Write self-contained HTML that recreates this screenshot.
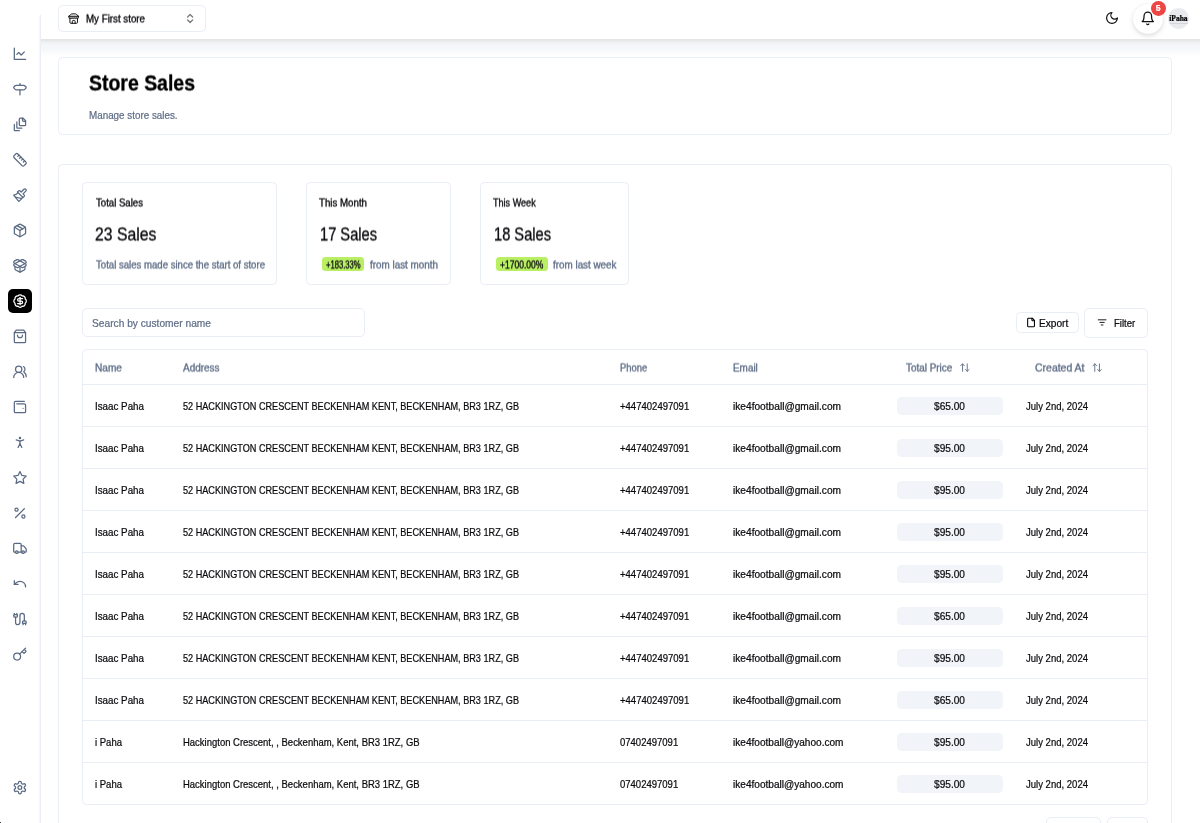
<!DOCTYPE html>
<html lang="en"><head><meta charset="utf-8"><title>Store Sales</title>
<style>
*{box-sizing:border-box;margin:0;padding:0}
html,body{width:1200px;height:823px;overflow:hidden;background:#fff}
body{position:relative;font-family:"Liberation Sans",sans-serif;color:#0b0b0f;-webkit-font-smoothing:antialiased}
main,header,nav{position:absolute;left:0;top:0;width:1200px;height:823px;overflow:hidden;will-change:transform}
header,nav{pointer-events:none}
.b{position:absolute}
.half{position:absolute;left:0;top:0;width:1200px;height:823px;will-change:transform;transform:translateY(.5px) rotate(.001deg)}
.t{position:absolute;white-space:pre;line-height:1;transform-origin:0 0;-webkit-text-stroke:.22px currentColor}
.tc{transform-origin:50% 0}
.half .t{-webkit-text-stroke:.34px currentColor}
.i{position:absolute;overflow:visible}
.hl{position:absolute;left:83.4px;width:1063.3px;height:1px;background:#e9edf5}
.bar{position:absolute;left:0;top:0;width:1200px;height:39px;background:#fff}
.shadow{position:absolute;left:40px;top:39px;width:1160px;height:17px;background:linear-gradient(to bottom,#e3e5e6 0,#e4e6e6 1px,#ebedee 2.5px,#f0f2f4 4px,#f3f5f8 5.5px,#f4f6fa 7px,#f5f7fa 10.5px,#fafbfc 13px,#fdfdfe 15.5px,#fff 17px)}
.side{position:absolute;left:0;top:0;width:40px;height:823px;background:#fff}
.sideline{position:absolute;left:39px;top:15px;width:2px;height:808px;background:linear-gradient(to right,#f5f7fa 0,#f5f7fa 1px,#ebeef5 1px,#ebeef5 2px)}
.active{position:absolute;width:24px;height:23.6px;border-radius:5px;background:#000}
.bellbtn{position:absolute;left:1133px;top:3.6px;width:30px;height:30px;border-radius:50%;background:#fff;box-shadow:0 2px 5px rgba(0,0,0,.13),0 0 2px rgba(0,0,0,.05)}
.badge{position:absolute;left:1150.9px;top:0.9px;width:14.8px;height:14.8px;border-radius:50%;background:#ef4444}
.avatar{position:absolute;left:1168px;top:8px;width:21px;height:21px;border-radius:50%;background:#e9eaee}
.avline{position:absolute;left:1170px;top:23px;width:17.5px;height:1px;background:#d3d5db}
</style></head>
<body>
<main>
<div class="b" style="left:57.80px;top:56.60px;width:1113.80px;height:78.00px;border-radius:4.5px;background:#fff;border:1px solid #e9edf5;"></div>

<span class="t" style="top:111px;font-size:10.05px;color:#5f6e87;left:88.90px;transform:scaleX(0.9792);">Manage store sales.</span>
<div class="b" style="left:57.80px;top:164.00px;width:1113.80px;height:736.00px;border-radius:4.5px;background:#fff;border:1px solid #e9edf5;"></div>
<div class="b" style="left:82.40px;top:182.40px;width:194.20px;height:102.20px;border-radius:4.5px;background:#fff;border:1px solid #e9edf5;"></div>



<div class="b" style="left:306.30px;top:182.40px;width:144.40px;height:102.20px;border-radius:4.5px;background:#fff;border:1px solid #e9edf5;"></div>


<div class="b" style="left:322.10px;top:257.40px;width:42.40px;height:13.80px;border-radius:3.5px;background:#b9ef62;"></div>


<div class="b" style="left:480.30px;top:182.40px;width:148.60px;height:102.20px;border-radius:4.5px;background:#fff;border:1px solid #e9edf5;"></div>


<div class="b" style="left:496.00px;top:257.40px;width:52.00px;height:13.80px;border-radius:3.5px;background:#b9ef62;"></div>


<div class="b" style="left:82.40px;top:308.10px;width:283.00px;height:29.40px;border-radius:5px;background:#fff;border:1px solid #e9edf5;"></div>
<span class="t" style="top:319px;font-size:10.05px;color:#5f6e87;left:92.30px;transform:scaleX(1.0147);">Search by customer name</span>
<div class="b" style="left:1016.00px;top:312.00px;width:63.00px;height:21.00px;border-radius:4.5px;background:#fff;border:1px solid #e9edf5;"></div>
<svg class="i" style="left:1025px;top:317px;width:12px;height:11px;color:#000" viewBox="-2.235 -0.941 28.235 25.882" fill="none" stroke="currentColor" stroke-width="2.5" stroke-linecap="round" stroke-linejoin="round"><path d="M15 2H6a2 2 0 0 0-2 2v16a2 2 0 0 0 2 2h12a2 2 0 0 0 2-2V7Z"/><path d="M14 2v4a2 2 0 0 0 2 2h4"/></svg>
<span class="t" style="top:319px;font-size:10.05px;left:1039.30px;transform:scaleX(1.0087);">Export</span>
<div class="b" style="left:1084.00px;top:308.00px;width:64.00px;height:30.00px;border-radius:5px;background:#fff;border:1px solid #e9edf5;"></div>
<svg class="i" style="left:1096px;top:317px;width:12px;height:11px;color:#111" viewBox="-2.214 -0.583 27.961 25.631" fill="none" stroke="currentColor" stroke-width="2.2" stroke-linecap="round" stroke-linejoin="round"><path d="M3 6h18"/><path d="M7 12h10"/><path d="M10 18h4"/></svg>
<span class="t" style="top:319px;font-size:10.05px;left:1113.80px;transform:scaleX(0.9495);">Filter</span>
<div class="b" style="left:82.40px;top:349.00px;width:1065.30px;height:456.00px;border-radius:4.5px;background:#fff;border:1px solid #e9edf5;"></div>





<svg class="i" style="left:959px;top:362px;width:12px;height:12px;color:#5f6e87" viewBox="-0.643 0.000 25.714 25.714" fill="none" stroke="currentColor" stroke-width="2" stroke-linecap="round" stroke-linejoin="round"><path d="m21 16-4 4-4-4"/><path d="M17 20V4"/><path d="m3 8 4-4 4 4"/><path d="M7 4v16"/></svg>

<svg class="i" style="left:1091px;top:362px;width:12px;height:12px;color:#5f6e87" viewBox="-1.071 0.000 25.714 25.714" fill="none" stroke="currentColor" stroke-width="2" stroke-linecap="round" stroke-linejoin="round"><path d="m21 16-4 4-4-4"/><path d="M17 20V4"/><path d="m3 8 4-4 4 4"/><path d="M7 4v16"/></svg>
<div class="hl" style="top:384.00px"></div>
<span class="t" style="top:402px;font-size:10.05px;left:95.20px;transform:scaleX(0.9745);">Isaac Paha</span>
<span class="t" style="top:402px;font-size:10.05px;left:183.00px;transform:scaleX(0.9086);">52 HACKINGTON CRESCENT BECKENHAM KENT, BECKENHAM, BR3 1RZ, GB</span>
<span class="t" style="top:402px;font-size:10.05px;left:620.20px;transform:scaleX(0.9490);">+447402497091</span>
<span class="t" style="top:402px;font-size:10.05px;left:733.30px;transform:scaleX(1.0111);">ike4football@gmail.com</span>
<div class="b" style="left:896.80px;top:397.10px;width:105.80px;height:17.80px;border-radius:4.5px;background:#f1f5f9;"></div>
<span class="t" style="top:402px;font-size:10.05px;left:934.10px;transform:scaleX(1.0086);">$65.00</span>
<span class="t" style="top:402px;font-size:10.05px;left:1026.30px;transform:scaleX(0.9486);">July 2nd, 2024</span>
<div class="hl" style="top:426.00px"></div>
<span class="t" style="top:444px;font-size:10.05px;left:95.20px;transform:scaleX(0.9745);">Isaac Paha</span>
<span class="t" style="top:444px;font-size:10.05px;left:183.00px;transform:scaleX(0.9086);">52 HACKINGTON CRESCENT BECKENHAM KENT, BECKENHAM, BR3 1RZ, GB</span>
<span class="t" style="top:444px;font-size:10.05px;left:620.20px;transform:scaleX(0.9490);">+447402497091</span>
<span class="t" style="top:444px;font-size:10.05px;left:733.30px;transform:scaleX(1.0111);">ike4football@gmail.com</span>
<div class="b" style="left:896.80px;top:439.10px;width:105.80px;height:17.80px;border-radius:4.5px;background:#f1f5f9;"></div>
<span class="t" style="top:444px;font-size:10.05px;left:934.10px;transform:scaleX(1.0086);">$95.00</span>
<span class="t" style="top:444px;font-size:10.05px;left:1026.30px;transform:scaleX(0.9486);">July 2nd, 2024</span>
<div class="hl" style="top:468.00px"></div>
<span class="t" style="top:486px;font-size:10.05px;left:95.20px;transform:scaleX(0.9745);">Isaac Paha</span>
<span class="t" style="top:486px;font-size:10.05px;left:183.00px;transform:scaleX(0.9086);">52 HACKINGTON CRESCENT BECKENHAM KENT, BECKENHAM, BR3 1RZ, GB</span>
<span class="t" style="top:486px;font-size:10.05px;left:620.20px;transform:scaleX(0.9490);">+447402497091</span>
<span class="t" style="top:486px;font-size:10.05px;left:733.30px;transform:scaleX(1.0111);">ike4football@gmail.com</span>
<div class="b" style="left:896.80px;top:481.10px;width:105.80px;height:17.80px;border-radius:4.5px;background:#f1f5f9;"></div>
<span class="t" style="top:486px;font-size:10.05px;left:934.10px;transform:scaleX(1.0086);">$95.00</span>
<span class="t" style="top:486px;font-size:10.05px;left:1026.30px;transform:scaleX(0.9486);">July 2nd, 2024</span>
<div class="hl" style="top:510.00px"></div>
<span class="t" style="top:528px;font-size:10.05px;left:95.20px;transform:scaleX(0.9745);">Isaac Paha</span>
<span class="t" style="top:528px;font-size:10.05px;left:183.00px;transform:scaleX(0.9086);">52 HACKINGTON CRESCENT BECKENHAM KENT, BECKENHAM, BR3 1RZ, GB</span>
<span class="t" style="top:528px;font-size:10.05px;left:620.20px;transform:scaleX(0.9490);">+447402497091</span>
<span class="t" style="top:528px;font-size:10.05px;left:733.30px;transform:scaleX(1.0111);">ike4football@gmail.com</span>
<div class="b" style="left:896.80px;top:523.10px;width:105.80px;height:17.80px;border-radius:4.5px;background:#f1f5f9;"></div>
<span class="t" style="top:528px;font-size:10.05px;left:934.10px;transform:scaleX(1.0086);">$95.00</span>
<span class="t" style="top:528px;font-size:10.05px;left:1026.30px;transform:scaleX(0.9486);">July 2nd, 2024</span>
<div class="hl" style="top:552.00px"></div>
<span class="t" style="top:570px;font-size:10.05px;left:95.20px;transform:scaleX(0.9745);">Isaac Paha</span>
<span class="t" style="top:570px;font-size:10.05px;left:183.00px;transform:scaleX(0.9086);">52 HACKINGTON CRESCENT BECKENHAM KENT, BECKENHAM, BR3 1RZ, GB</span>
<span class="t" style="top:570px;font-size:10.05px;left:620.20px;transform:scaleX(0.9490);">+447402497091</span>
<span class="t" style="top:570px;font-size:10.05px;left:733.30px;transform:scaleX(1.0111);">ike4football@gmail.com</span>
<div class="b" style="left:896.80px;top:565.10px;width:105.80px;height:17.80px;border-radius:4.5px;background:#f1f5f9;"></div>
<span class="t" style="top:570px;font-size:10.05px;left:934.10px;transform:scaleX(1.0086);">$95.00</span>
<span class="t" style="top:570px;font-size:10.05px;left:1026.30px;transform:scaleX(0.9486);">July 2nd, 2024</span>
<div class="hl" style="top:594.00px"></div>
<span class="t" style="top:612px;font-size:10.05px;left:95.20px;transform:scaleX(0.9745);">Isaac Paha</span>
<span class="t" style="top:612px;font-size:10.05px;left:183.00px;transform:scaleX(0.9086);">52 HACKINGTON CRESCENT BECKENHAM KENT, BECKENHAM, BR3 1RZ, GB</span>
<span class="t" style="top:612px;font-size:10.05px;left:620.20px;transform:scaleX(0.9490);">+447402497091</span>
<span class="t" style="top:612px;font-size:10.05px;left:733.30px;transform:scaleX(1.0111);">ike4football@gmail.com</span>
<div class="b" style="left:896.80px;top:607.10px;width:105.80px;height:17.80px;border-radius:4.5px;background:#f1f5f9;"></div>
<span class="t" style="top:612px;font-size:10.05px;left:934.10px;transform:scaleX(1.0086);">$65.00</span>
<span class="t" style="top:612px;font-size:10.05px;left:1026.30px;transform:scaleX(0.9486);">July 2nd, 2024</span>
<div class="hl" style="top:636.00px"></div>
<span class="t" style="top:654px;font-size:10.05px;left:95.20px;transform:scaleX(0.9745);">Isaac Paha</span>
<span class="t" style="top:654px;font-size:10.05px;left:183.00px;transform:scaleX(0.9086);">52 HACKINGTON CRESCENT BECKENHAM KENT, BECKENHAM, BR3 1RZ, GB</span>
<span class="t" style="top:654px;font-size:10.05px;left:620.20px;transform:scaleX(0.9490);">+447402497091</span>
<span class="t" style="top:654px;font-size:10.05px;left:733.30px;transform:scaleX(1.0111);">ike4football@gmail.com</span>
<div class="b" style="left:896.80px;top:649.10px;width:105.80px;height:17.80px;border-radius:4.5px;background:#f1f5f9;"></div>
<span class="t" style="top:654px;font-size:10.05px;left:934.10px;transform:scaleX(1.0086);">$95.00</span>
<span class="t" style="top:654px;font-size:10.05px;left:1026.30px;transform:scaleX(0.9486);">July 2nd, 2024</span>
<div class="hl" style="top:678.00px"></div>
<span class="t" style="top:696px;font-size:10.05px;left:95.20px;transform:scaleX(0.9745);">Isaac Paha</span>
<span class="t" style="top:696px;font-size:10.05px;left:183.00px;transform:scaleX(0.9086);">52 HACKINGTON CRESCENT BECKENHAM KENT, BECKENHAM, BR3 1RZ, GB</span>
<span class="t" style="top:696px;font-size:10.05px;left:620.20px;transform:scaleX(0.9490);">+447402497091</span>
<span class="t" style="top:696px;font-size:10.05px;left:733.30px;transform:scaleX(1.0111);">ike4football@gmail.com</span>
<div class="b" style="left:896.80px;top:691.10px;width:105.80px;height:17.80px;border-radius:4.5px;background:#f1f5f9;"></div>
<span class="t" style="top:696px;font-size:10.05px;left:934.10px;transform:scaleX(1.0086);">$65.00</span>
<span class="t" style="top:696px;font-size:10.05px;left:1026.30px;transform:scaleX(0.9486);">July 2nd, 2024</span>
<div class="hl" style="top:720.00px"></div>
<span class="t" style="top:738px;font-size:10.05px;left:95.20px;transform:scaleX(0.9474);">i Paha</span>
<span class="t" style="top:738px;font-size:10.05px;left:183.00px;transform:scaleX(0.9436);">Hackington Crescent, , Beckenham, Kent, BR3 1RZ, GB</span>
<span class="t" style="top:738px;font-size:10.05px;left:620.20px;transform:scaleX(0.9468);">07402497091</span>
<span class="t" style="top:738px;font-size:10.05px;left:733.30px;transform:scaleX(1.0028);">ike4football@yahoo.com</span>
<div class="b" style="left:896.80px;top:733.10px;width:105.80px;height:17.80px;border-radius:4.5px;background:#f1f5f9;"></div>
<span class="t" style="top:738px;font-size:10.05px;left:934.10px;transform:scaleX(1.0086);">$95.00</span>
<span class="t" style="top:738px;font-size:10.05px;left:1026.30px;transform:scaleX(0.9486);">July 2nd, 2024</span>
<div class="hl" style="top:762.00px"></div>
<span class="t" style="top:780px;font-size:10.05px;left:95.20px;transform:scaleX(0.9474);">i Paha</span>
<span class="t" style="top:780px;font-size:10.05px;left:183.00px;transform:scaleX(0.9436);">Hackington Crescent, , Beckenham, Kent, BR3 1RZ, GB</span>
<span class="t" style="top:780px;font-size:10.05px;left:620.20px;transform:scaleX(0.9468);">07402497091</span>
<span class="t" style="top:780px;font-size:10.05px;left:733.30px;transform:scaleX(1.0028);">ike4football@yahoo.com</span>
<div class="b" style="left:896.80px;top:775.10px;width:105.80px;height:17.80px;border-radius:4.5px;background:#f1f5f9;"></div>
<span class="t" style="top:780px;font-size:10.05px;left:934.10px;transform:scaleX(1.0086);">$95.00</span>
<span class="t" style="top:780px;font-size:10.05px;left:1026.30px;transform:scaleX(0.9486);">July 2nd, 2024</span>
<div class="b" style="left:1045.70px;top:817.20px;width:55.30px;height:32.80px;border-radius:5px;background:#fff;border:1px solid #e9edf5;"></div>
<div class="b" style="left:1106.70px;top:817.20px;width:41.00px;height:32.80px;border-radius:5px;background:#fff;border:1px solid #e9edf5;"></div>
<div class="half"><span class="t" style="top:73px;font-size:21.4px;font-weight:700;color:#000;left:89.20px;transform:scaleX(0.9096);">Store Sales</span><span class="t" style="top:198px;font-size:10.05px;left:95.60px;transform:scaleX(0.9561);">Total Sales</span><span class="t" style="top:226px;font-size:17.8px;left:95.30px;transform:scaleX(0.8858);">23 Sales</span><span class="t" style="top:260px;font-size:10.05px;color:#5f6e87;left:95.60px;transform:scaleX(0.9546);">Total sales made since the start of store</span><span class="t" style="top:198px;font-size:10.05px;left:319.30px;transform:scaleX(0.9657);">This Month</span><span class="t" style="top:226px;font-size:17.8px;left:319.60px;transform:scaleX(0.8237);">17 Sales</span><span class="t" style="top:260px;font-size:10.05px;left:326.20px;transform:scaleX(0.7599);">+183.33%</span><span class="t" style="top:260px;font-size:10.05px;color:#5f6e87;left:370.30px;transform:scaleX(0.9822);">from last month</span><span class="t" style="top:198px;font-size:10.05px;left:493.30px;transform:scaleX(0.9031);">This Week</span><span class="t" style="top:226px;font-size:17.8px;left:493.60px;transform:scaleX(0.8237);">18 Sales</span><span class="t" style="top:260px;font-size:10.05px;left:500.20px;transform:scaleX(0.8469);">+1700.00%</span><span class="t" style="top:260px;font-size:10.05px;color:#5f6e87;left:553.00px;transform:scaleX(0.9805);">from last week</span><span class="t" style="top:363px;font-size:10.05px;color:#5f6e87;left:95.30px;transform:scaleX(1.0070);">Name</span><span class="t" style="top:363px;font-size:10.05px;color:#5f6e87;left:183.20px;transform:scaleX(0.9930);">Address</span><span class="t" style="top:363px;font-size:10.05px;color:#5f6e87;left:620.20px;transform:scaleX(0.9359);">Phone</span><span class="t" style="top:363px;font-size:10.05px;color:#5f6e87;left:733.10px;transform:scaleX(0.9871);">Email</span><span class="t" style="top:363px;font-size:10.05px;color:#5f6e87;left:906.20px;transform:scaleX(0.9849);">Total Price</span><span class="t" style="top:363px;font-size:10.05px;color:#5f6e87;left:1035.20px;transform:scaleX(1.0424);">Created At</span></div>
</main>
<header>
<div class="shadow"></div>
<div class="bar"></div>
<div class="b" style="left:58.00px;top:5.00px;width:148.00px;height:27.00px;border-radius:4.5px;background:#fff;border:1px solid #e9edf5;"></div>
<svg class="i" style="left:68px;top:12px;width:12px;height:13px;color:#111" viewBox="-0.106 -2.018 25.487 27.611" fill="none" stroke="currentColor" stroke-width="2.1" stroke-linecap="round" stroke-linejoin="round"><rect x="3" y="7" width="18" height="4.500" fill="currentColor" stroke="none" opacity=".45"/><path d="m2 7 4.410-4.410A2 2 0 0 1 7.830 2h8.340a2 2 0 0 1 1.420.590L22 7"/><path d="M4 12v8a2 2 0 0 0 2 2h12a2 2 0 0 0 2-2v-8"/><path d="M15 22v-4a2 2 0 0 0-2-2h-2a2 2 0 0 0-2 2v4"/><path d="M2 7h20"/><path d="M22 7v3a2 2 0 0 1-2 2a2.700 2.700 0 0 1-1.590-.630.700.700 0 0 0-.820 0A2.700 2.700 0 0 1 16 12a2.700 2.700 0 0 1-1.590-.630.700.700 0 0 0-.820 0A2.700 2.700 0 0 1 12 12a2.700 2.700 0 0 1-1.590-.630.700.700 0 0 0-.820 0A2.700 2.700 0 0 1 8 12a2.700 2.700 0 0 1-1.590-.630.700.700 0 0 0-.820 0A2.700 2.700 0 0 1 4 12a2 2 0 0 1-2-2V7"/></svg>

<svg class="i" style="left:184px;top:12px;width:13px;height:13px;color:#111;opacity:0.55" viewBox="-0.200 -1.000 26.000 26.000" fill="none" stroke="currentColor" stroke-width="2.7" stroke-linecap="round" stroke-linejoin="round"><path d="m7 15 5 5 5-5"/><path d="m7 9 5-5 5 5"/></svg>
<svg class="i" style="left:1104px;top:10px;width:16px;height:16px;color:#111" viewBox="-1.333 -1.333 26.667 26.667" fill="none" stroke="currentColor" stroke-width="2" stroke-linecap="round" stroke-linejoin="round"><path d="M12 3a6 6 0 0 0 9 9 9 9 0 1 1-9-9Z"/></svg>
<div class="bellbtn"></div>
<svg class="i" style="left:1140px;top:10px;width:16px;height:16px;color:#111" viewBox="-0.480 -1.440 25.600 25.600" fill="none" stroke="currentColor" stroke-width="2" stroke-linecap="round" stroke-linejoin="round"><path d="M6 8a6 6 0 0 1 12 0c0 7 3 9 3 9H3s3-2 3-9"/><path d="M10.300 21a1.940 1.940 0 0 0 3.400 0"/></svg>
<div class="badge"></div>
<span class="t tc" style="top:4px;font-size:8.6px;font-weight:700;color:#fff;left:1155.81px;">5</span>
<div class="avatar"></div>
<span class="t tc" style="top:15px;font-size:7.7px;font-weight:700;color:#000;font-family:'Liberation Serif',serif;left:1169.10px;transform:scaleX(0.9789);">iPaha</span>
<div class="avline"></div>
<div class="half"><span class="t" style="top:14px;font-size:10.05px;left:86.20px;transform:scaleX(0.9697);">My First store</span></div>
</header>
<nav>
<div class="side"></div><div class="sideline"></div>
<svg class="i" style="left:12px;top:46px;width:16px;height:16px;color:#5a6a84" viewBox="-0.720 -0.480 25.600 25.600" fill="none" stroke="currentColor" stroke-width="2" stroke-linecap="round" stroke-linejoin="round"><path d="M3 3v18h18"/><path d="m19 9-5 5-4-4-3 3"/></svg>
<svg class="i" style="left:12px;top:81px;width:16px;height:16px;color:#5a6a84" viewBox="-0.720 -1.008 25.600 25.600" fill="none" stroke="currentColor" stroke-width="2" stroke-linecap="round" stroke-linejoin="round"><path d="M12 3v3"/><path d="M18.172 6a2 2 0 0 1 1.414.586l2.060 2.060a1.207 1.207 0 0 1 0 1.708l-2.060 2.060a2 2 0 0 1-1.414.586H5.828a2 2 0 0 1-1.414-.586l-2.060-2.060a1.207 1.207 0 0 1 0-1.708l2.060-2.060A2 2 0 0 1 5.828 6z"/><path d="M12 13v8"/></svg>
<svg class="i" style="left:12px;top:116px;width:16px;height:16px;color:#5a6a84" viewBox="-0.720 -1.536 25.600 25.600" fill="none" stroke="currentColor" stroke-width="2" stroke-linecap="round" stroke-linejoin="round"><path d="M21 7h-3a2 2 0 0 1-2-2V2"/><path d="M21 6v6.500c0 .8-.7 1.500-1.500 1.500h-7c-.8 0-1.500-.7-1.500-1.500v-9c0-.8.700-1.500 1.500-1.500H17Z"/><path d="M7 8v8.800c0 .3.200.6.400.8.200.2.500.4.800.4H15"/><path d="M3 12v8.800c0 .3.200.6.400.8.200.2.500.4.800.4H11"/></svg>
<svg class="i" style="left:12px;top:152px;width:16px;height:16px;color:#5a6a84" viewBox="-0.720 -0.464 25.600 25.600" fill="none" stroke="currentColor" stroke-width="2" stroke-linecap="round" stroke-linejoin="round"><path d="M21.300 15.300a2.400 2.400 0 0 1 0 3.400l-2.600 2.600a2.400 2.400 0 0 1-3.400 0L2.700 8.700a2.410 2.410 0 0 1 0-3.400l2.600-2.600a2.410 2.410 0 0 1 3.400 0Z"/><path d="m14.500 12.500 2-2"/><path d="m11.500 9.500 2-2"/><path d="m8.500 6.500 2-2"/><path d="m17.500 15.500 2-2"/></svg>
<svg class="i" style="left:12px;top:187px;width:16px;height:16px;color:#5a6a84" viewBox="-0.720 -0.992 25.600 25.600" fill="none" stroke="currentColor" stroke-width="2" stroke-linecap="round" stroke-linejoin="round"><path d="M18.370 2.630 14 7l-1.590-1.590a2 2 0 0 0-2.820 0L8 7l9 9 1.590-1.590a2 2 0 0 0 0-2.820L17 10l4.370-4.370a2.120 2.120 0 1 0-3-3Z"/><path d="M9 8c-2 3-4 3.500-7 4l8 10c2-1 6-5 6-7"/><path d="M14.500 17.500 4.500 15"/></svg>
<svg class="i" style="left:12px;top:222px;width:16px;height:16px;color:#5a6a84" viewBox="-0.720 -1.520 25.600 25.600" fill="none" stroke="currentColor" stroke-width="2" stroke-linecap="round" stroke-linejoin="round"><path d="m7.500 4.270 9 5.150"/><path d="M21 8a2 2 0 0 0-1-1.730l-7-4a2 2 0 0 0-2 0l-7 4A2 2 0 0 0 3 8v8a2 2 0 0 0 1 1.730l7 4a2 2 0 0 0 2 0l7-4A2 2 0 0 0 21 16Z"/><path d="m3.300 7 8.700 5 8.700-5"/><path d="M12 22V12"/></svg>
<svg class="i" style="left:12px;top:258px;width:16px;height:16px;color:#5a6a84" viewBox="-0.720 -0.448 25.600 25.600" fill="none" stroke="currentColor" stroke-width="2" stroke-linecap="round" stroke-linejoin="round"><path d="M12 22v-9"/><path d="M15.170 2.210a1.670 1.670 0 0 1 1.630 0L21 4.570a1.930 1.930 0 0 1 0 3.360L8.820 14.790a1.655 1.655 0 0 1-1.640 0L3 12.430a1.930 1.930 0 0 1 0-3.360z"/><path d="M20 13v3.870a2.060 2.060 0 0 1-1.110 1.830l-6 3.080a1.930 1.930 0 0 1-1.780 0l-6-3.080A2.060 2.060 0 0 1 4 16.870V13"/><path d="M21 12.430a1.930 1.930 0 0 0 0-3.360L8.830 2.200a1.640 1.640 0 0 0-1.630 0L3 4.570a1.930 1.930 0 0 0 0 3.360l12.180 6.860a1.636 1.636 0 0 0 1.630 0z"/></svg>
<div class="active" style="left:8.1px;top:289.31px"></div>
<svg class="i" style="left:12px;top:293px;width:16px;height:16px;color:#fff" viewBox="-0.960 -0.976 25.600 25.600" fill="none" stroke="currentColor" stroke-width="2" stroke-linecap="round" stroke-linejoin="round"><path d="M3.850 8.620a4 4 0 0 1 4.780-4.770 4 4 0 0 1 6.740 0 4 4 0 0 1 4.780 4.780 4 4 0 0 1 0 6.740 4 4 0 0 1-4.770 4.780 4 4 0 0 1-6.750 0 4 4 0 0 1-4.780-4.770 4 4 0 0 1 0-6.760Z"/><path d="M16 8h-6a2 2 0 1 0 0 4h4a2 2 0 1 1 0 4H8"/><path d="M12 18V6"/></svg>
<svg class="i" style="left:12px;top:328px;width:16px;height:16px;color:#5a6a84" viewBox="-0.720 -1.504 25.600 25.600" fill="none" stroke="currentColor" stroke-width="2" stroke-linecap="round" stroke-linejoin="round"><path d="M6 2 3 6v14a2 2 0 0 0 2 2h14a2 2 0 0 0 2-2V6l-3-4Z"/><path d="M3 6h18"/><path d="M16 10a4 4 0 0 1-8 0"/></svg>
<svg class="i" style="left:12px;top:364px;width:16px;height:16px;color:#5a6a84" viewBox="-0.720 -0.432 25.600 25.600" fill="none" stroke="currentColor" stroke-width="2" stroke-linecap="round" stroke-linejoin="round"><path d="M18 21a8 8 0 0 0-16 0"/><circle cx="10" cy="8" r="5"/><path d="M22 20c0-3.370-2-6.500-4-8a5 5 0 0 0-.45-8.300"/></svg>
<svg class="i" style="left:12px;top:399px;width:16px;height:16px;color:#5a6a84" viewBox="-0.720 -0.960 25.600 25.600" fill="none" stroke="currentColor" stroke-width="2" stroke-linecap="round" stroke-linejoin="round"><path d="M17 14h.01"/><path d="M7 7h12a2 2 0 0 1 2 2v10a2 2 0 0 1-2 2H5a2 2 0 0 1-2-2V5a2 2 0 0 1 2-2h14"/></svg>
<svg class="i" style="left:12px;top:434px;width:16px;height:16px;color:#5a6a84" viewBox="-0.720 -1.488 25.600 25.600" fill="none" stroke="currentColor" stroke-width="2" stroke-linecap="round" stroke-linejoin="round"><circle cx="12" cy="5" r="1"/><path d="m9 20 3-6 3 6"/><path d="m6 8 6 2 6-2"/><path d="M12 10v4"/></svg>
<svg class="i" style="left:12px;top:470px;width:16px;height:16px;color:#5a6a84" viewBox="-0.720 -0.416 25.600 25.600" fill="none" stroke="currentColor" stroke-width="2" stroke-linecap="round" stroke-linejoin="round"><polygon points="12 2 15.090 8.260 22 9.270 17 14.140 18.180 21.020 12 17.770 5.820 21.020 7 14.140 2 9.270 8.910 8.260 12 2"/></svg>
<svg class="i" style="left:12px;top:505px;width:16px;height:16px;color:#5a6a84" viewBox="-0.720 -0.944 25.600 25.600" fill="none" stroke="currentColor" stroke-width="2" stroke-linecap="round" stroke-linejoin="round"><line x1="19" x2="5" y1="5" y2="19"/><circle cx="6.500" cy="6.500" r="2.500"/><circle cx="17.500" cy="17.500" r="2.500"/></svg>
<svg class="i" style="left:12px;top:540px;width:16px;height:16px;color:#5a6a84" viewBox="-0.720 -1.472 25.600 25.600" fill="none" stroke="currentColor" stroke-width="2" stroke-linecap="round" stroke-linejoin="round"><path d="M14 18V6a2 2 0 0 0-2-2H4a2 2 0 0 0-2 2v11a1 1 0 0 0 1 1h2"/><path d="M15 18H9"/><path d="M19 18h2a1 1 0 0 0 1-1v-3.650a1 1 0 0 0-.22-.624l-3.480-4.350A1 1 0 0 0 17.520 8H14"/><circle cx="17" cy="18" r="2"/><circle cx="7" cy="18" r="2"/></svg>
<svg class="i" style="left:12px;top:576px;width:16px;height:16px;color:#5a6a84" viewBox="-0.720 -0.400 25.600 25.600" fill="none" stroke="currentColor" stroke-width="2" stroke-linecap="round" stroke-linejoin="round"><path d="M3 7v6h6"/><path d="M21 17a9 9 0 0 0-9-9 9 9 0 0 0-6 2.300L3 13"/></svg>
<svg class="i" style="left:12px;top:611px;width:16px;height:16px;color:#5a6a84" viewBox="-0.720 -0.928 25.600 25.600" fill="none" stroke="currentColor" stroke-width="2" stroke-linecap="round" stroke-linejoin="round"><path d="M17 21v-2a1 1 0 0 1-1-1v-1a2 2 0 0 1 2-2h2a2 2 0 0 1 2 2v1a1 1 0 0 1-1 1"/><path d="M19 15V6.500a1 1 0 0 0-7 0v11a1 1 0 0 1-7 0V9"/><path d="M21 21v-2h-4"/><path d="M3 5h4V3"/><path d="M7 5a1 1 0 0 1 1 1v1a2 2 0 0 1-2 2H4a2 2 0 0 1-2-2V6a1 1 0 0 1 1-1V3"/></svg>
<svg class="i" style="left:12px;top:646px;width:16px;height:16px;color:#5a6a84" viewBox="-0.720 -1.456 25.600 25.600" fill="none" stroke="currentColor" stroke-width="2" stroke-linecap="round" stroke-linejoin="round"><path d="m15.500 7.500 2.300 2.300a1 1 0 0 0 1.400 0l2.100-2.100a1 1 0 0 0 0-1.400L19 4"/><path d="m21 2-9.600 9.600"/><circle cx="7.500" cy="15.500" r="5.500"/></svg>
<svg class="i" style="left:12px;top:780px;width:16px;height:16px;color:#5a6a84" viewBox="-0.640 -0.160 25.600 25.600" fill="none" stroke="currentColor" stroke-width="2" stroke-linecap="round" stroke-linejoin="round"><path d="M12.220 2h-.44a2 2 0 0 0-2 2v.18a2 2 0 0 1-1 1.730l-.43.250a2 2 0 0 1-2 0l-.15-.08a2 2 0 0 0-2.730.730l-.22.380a2 2 0 0 0 .730 2.730l.15.100a2 2 0 0 1 1 1.720v.510a2 2 0 0 1-1 1.740l-.15.090a2 2 0 0 0-.730 2.730l.22.380a2 2 0 0 0 2.730.730l.15-.08a2 2 0 0 1 2 0l.43.250a2 2 0 0 1 1 1.730V20a2 2 0 0 0 2 2h.44a2 2 0 0 0 2-2v-.18a2 2 0 0 1 1-1.730l.43-.250a2 2 0 0 1 2 0l.15.080a2 2 0 0 0 2.730-.730l.22-.390a2 2 0 0 0-.730-2.730l-.15-.08a2 2 0 0 1-1-1.740v-.500a2 2 0 0 1 1-1.740l.15-.09a2 2 0 0 0 .730-2.730l-.22-.380a2 2 0 0 0-2.730-.730l-.15.080a2 2 0 0 1-2 0l-.43-.250a2 2 0 0 1-1-1.730V4a2 2 0 0 0-2-2z"/><circle cx="12" cy="12" r="3"/></svg>
<div style="position:absolute;left:0;top:822px;width:1px;height:1px;background:#444"></div>
</nav>
</body></html>
